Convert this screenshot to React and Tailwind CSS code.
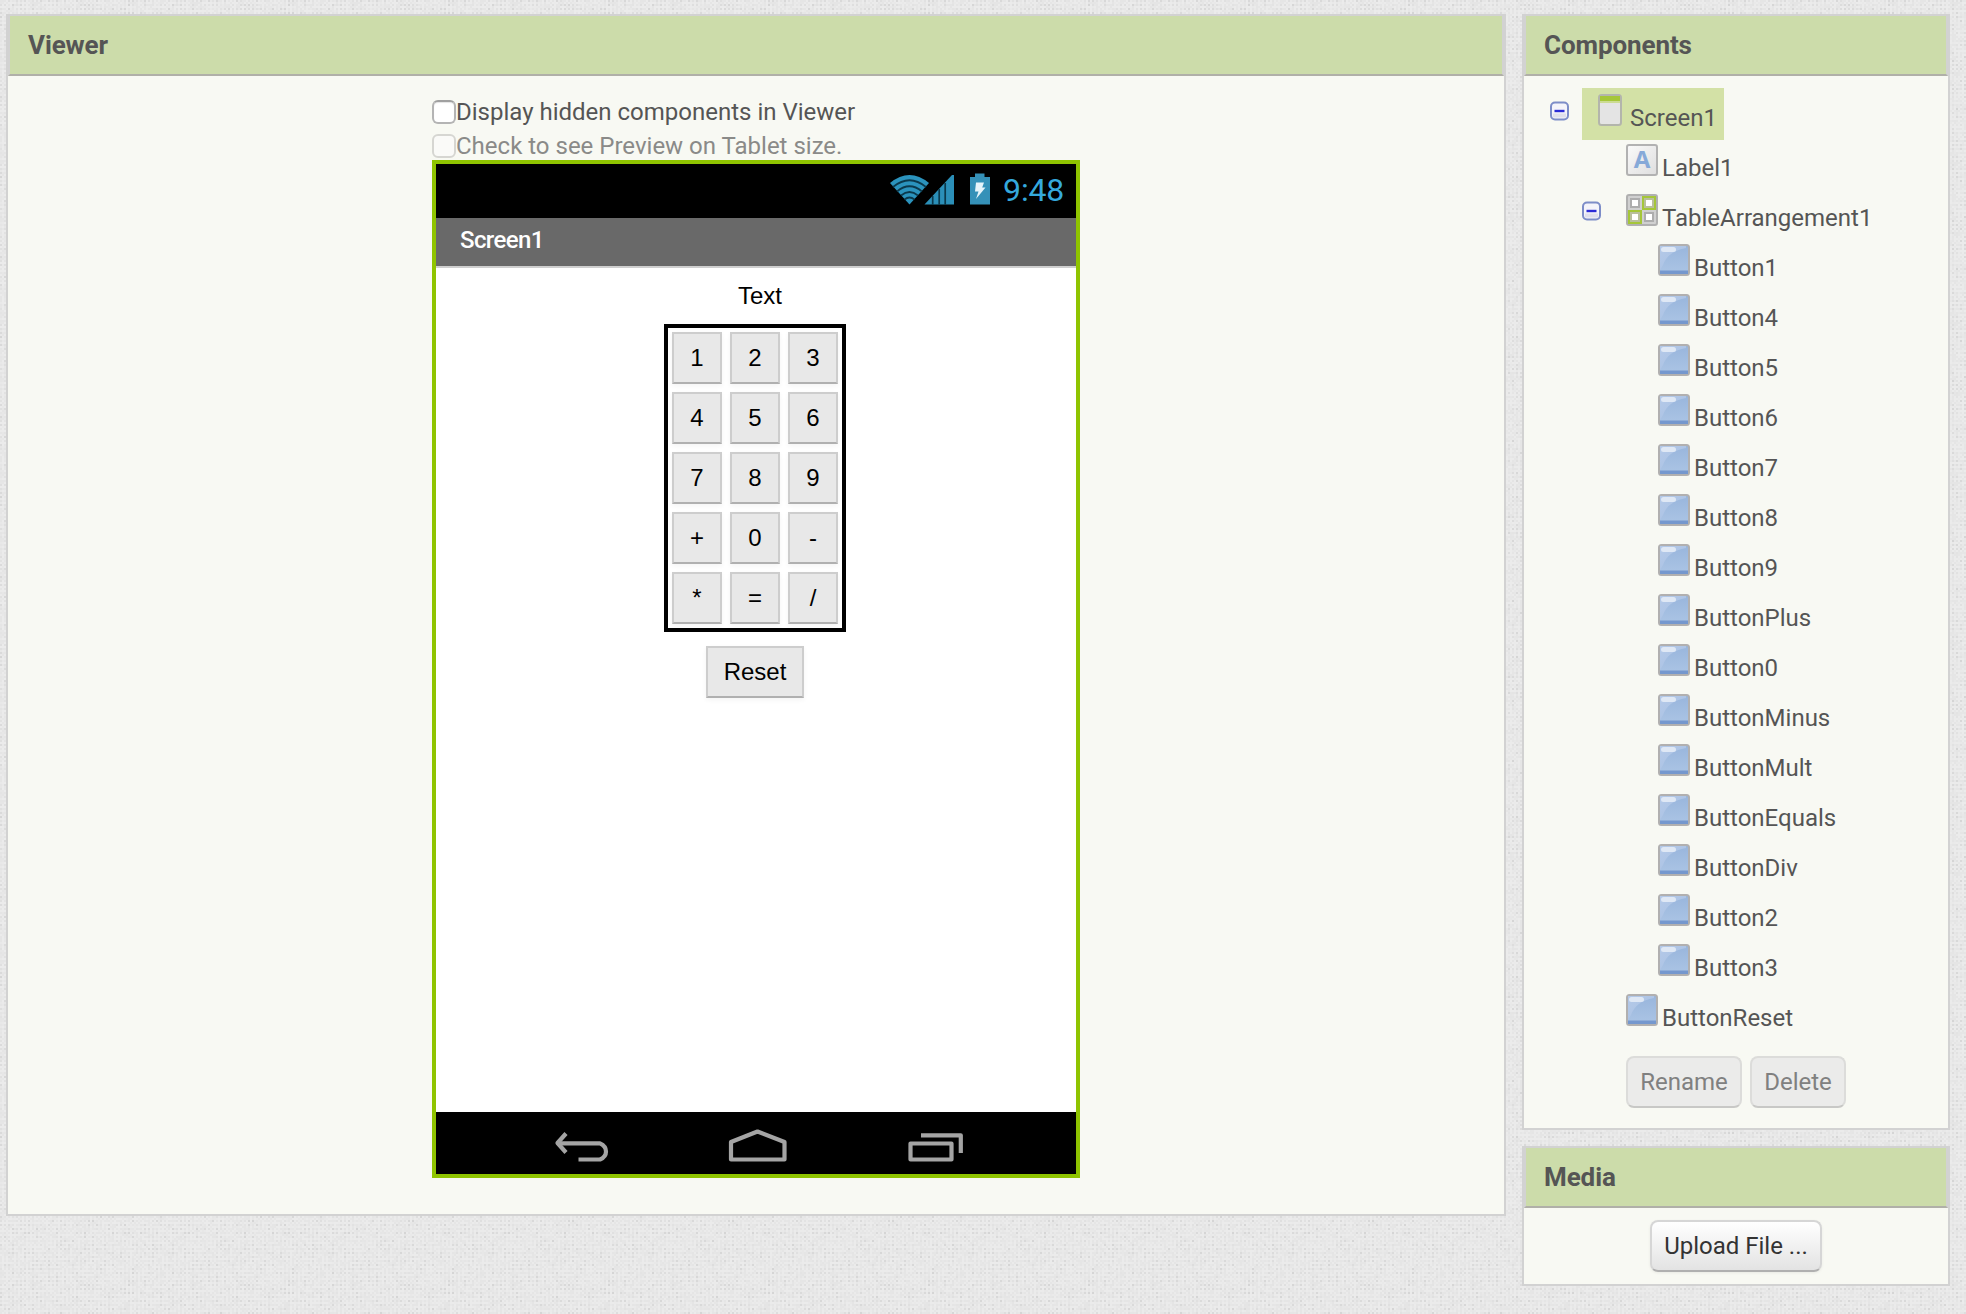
import React from "react";

const BUTTON_NAMES = [
  "Button1", "Button4", "Button5", "Button6", "Button7", "Button8", "Button9",
  "ButtonPlus", "Button0", "ButtonMinus", "ButtonMult", "ButtonEquals",
  "ButtonDiv", "Button2", "Button3",
];

const KEYS = ["1", "2", "3", "4", "5", "6", "7", "8", "9", "+", "0", "-", "*", "=", "/"];

// Woven texture cells: deterministic noise on a 2px grid.
const CELLS = (() => {
  let seed = 7;
  const rnd = () => {
    seed = (seed * 16807) % 2147483647;
    return seed / 2147483647;
  };
  const out = [];
  for (let y = 0; y < 80; y++) {
    for (let x = 0; x < 80; x++) {
      const r = rnd();
      const knot = x % 2 === 0 && y % 2 === 0;
      if (knot) out.push({ x, y, o: 0.025 + r * r * r * 0.07 });
      else if (r > 0.4) out.push({ x, y, o: (r - 0.4) * 0.045 });
    }
  }
  return out;
})();

function Linen() {
  return (
    <svg className="absolute inset-0 h-full w-full" aria-hidden="true">
      <defs>
        <pattern id="linen" width="160" height="160" patternUnits="userSpaceOnUse">
          {CELLS.map((c) => (
            <rect key={c.x + "-" + c.y} x={c.x * 2} y={c.y * 2} width="2" height="2" fill="#000" fillOpacity={c.o} />
          ))}
        </pattern>
      </defs>
      <rect width="100%" height="100%" fill="url(#linen)" />
    </svg>
  );
}

function Panel({ title, className, children }) {
  return (
    <section className={"flex flex-col border-2 border-[#d2d2d2] bg-[#f8f9f3] " + className}>
      <h2 className="flex h-[60px] shrink-0 items-center border-x-2 border-b-2 border-x-[#d2d2d2] border-b-[#b0b0a8] bg-[#ccdcaa] px-[18px] text-[26px] font-bold tracking-[-0.1px] text-[#555]">
        {title}
      </h2>
      {children}
    </section>
  );
}

function CheckRow({ label, disabled }) {
  return (
    <label className={"flex h-[34px] items-center " + (disabled ? "text-[#8a8a88]" : "")}>
      <span
        className={
          "h-6 w-6 shrink-0 rounded-[6px] border-2 " +
          (disabled
            ? "border-[#d6d6d2] bg-[#fafaf8]"
            : "border-[#b4b4b4] border-t-[#a0a0a0] bg-white shadow-[inset_0_1px_1px_#e4e4e4]")
        }
      />
      <span className="whitespace-nowrap">{label}</span>
    </label>
  );
}

function StatusIcons() {
  return (
    <svg width="104" height="34" viewBox="888 171 104 34" aria-hidden="true">
      <path d="M909.5 203.5 L890 182 Q909.5 166 929 182 Z" fill="#2b93bd" />
      <g fill="none" stroke="#0b394c" strokeWidth="1.7">
        <path d="M893 186 Q909.5 172.500 926 186" />
        <path d="M897 190.500 Q909.5 180 922 190.500" />
        <path d="M901 194.500 Q909.5 187.500 918 194.500" />
        <path d="M904.500 198.500 Q909.5 194.500 914.500 198.500" />
      </g>
      <path d="M924.500 203.500 L952 174 H954 V203.500 Z" fill="#2b8fb8" />
      <path d="M932.700 195V204M939.200 188V204M945.200 182V204" stroke="#0b394c" strokeWidth="1.700" />
      <path d="M975 172.500 h9.500 v3.500 h5.500 v27.500 h-20 v-27.500 h5 z" fill="#3591b8" />
      <path d="M976 181.500 h8 l-1.800 5 h3.300 l-9.500 11.500 2.500 -7.500 h-3.500 z" fill="#e6f4fa" />
    </svg>
  );
}

function NavIcons() {
  return (
    <svg width="640" height="62" viewBox="436 1112 640 62" fill="none" stroke="#a4a4a4" strokeWidth="4.200" strokeLinejoin="round" aria-hidden="true">
      <path d="M566 1133.500 L557.500 1143 L566 1152.500" />
      <path d="M558 1143.300 H600 Q606 1146 606 1151.500 Q606 1157 600 1159.500 H578.500" />
      <path d="M731 1159.500 V1142 L757.500 1131.500 L784.500 1142 V1159.500 Z" />
      <rect x="910.500" y="1143.500" width="41" height="16" />
      <path d="M921 1135.300 H960.800 V1153" />
    </svg>
  );
}

const KEY_STYLE =
  "flex h-[52px] items-center justify-center border-2 border-[#cdcdcd] border-b-[#b0b0b0] bg-[#e8e8e8] font-['Liberation_Sans',sans-serif] text-black shadow-[0_2px_5px_#0000000c] ";

function Phone() {
  return (
    <div className="flex h-[1018px] w-[648px] flex-col border-4 border-[#8fc400] bg-white">
      <div className="flex h-[54px] items-start justify-end bg-black pr-[12px] pt-2">
        <StatusIcons />
        <span className="ml-[11px] text-[32px] leading-9 tracking-[-0.2px] text-[#35a9dc]">9:48</span>
      </div>
      <div className="flex h-[50px] items-start border-b-2 border-[#cfcfcf] bg-[#696969] pl-6 pt-2 font-medium leading-7 tracking-[-0.6px] text-white">
        Screen1
      </div>
      <div className="flex flex-1 flex-col items-center pr-[2px] font-['Liberation_Sans',sans-serif] text-black">
        <div className="mt-[14px] h-7 pl-[10px] leading-7">Text</div>
        <div className="mt-[14px] grid h-[308px] w-[182px] grid-cols-3 gap-2 border-4 border-black p-1">
          {KEYS.map((k) => (
            <button key={k} className={KEY_STYLE}>{k}</button>
          ))}
        </div>
        <button className={KEY_STYLE + "mt-[14px] w-[98px]"}>Reset</button>
      </div>
      <div className="h-[62px] bg-black">
        <NavIcons />
      </div>
    </div>
  );
}

function Toggle() {
  return (
    <svg width="20" height="20" viewBox="0 0 20 20" className="shrink-0" aria-hidden="true">
      <rect x="1" y="1.500" width="17" height="17" rx="4" fill="#f4f4fa" stroke="#7d8dc8" strokeWidth="2" />
      <path d="M3 12.500h13v4H3z" fill="#e0e0ec" />
      <path d="M4.500 10h10" stroke="#2b2bd6" strokeWidth="2.400" />
    </svg>
  );
}

function ScreenIcon() {
  return (
    <svg width="24" height="32" viewBox="0 0 24 32" aria-hidden="true">
      <rect x="1" y="1" width="22" height="30" rx="2.500" fill="#e4e4e4" stroke="#b3b5ac" strokeWidth="2" />
      <path d="M2 2h20v5H2z" fill="#a5c639" />
      <path d="M2 7h20v2H2z" fill="#cbdb92" />
    </svg>
  );
}

function LabelIcon() {
  return (
    <svg width="32" height="32" viewBox="0 0 32 32" aria-hidden="true">
      <defs>
        <linearGradient id="labelFill" x1="0" y1="0" x2="1" y2="1">
          <stop offset="0" stopColor="#fafafa" />
          <stop offset="1" stopColor="#dedede" />
        </linearGradient>
      </defs>
      <rect x="1" y="1" width="30" height="30" rx="2" fill="url(#labelFill)" stroke="#b2b2b2" strokeWidth="2" />
      <text x="16" y="24" textAnchor="middle" fontFamily="Noto Sans, sans-serif" fontWeight="700" fontSize="24" fill="#86a9d8">A</text>
    </svg>
  );
}

function TableIcon() {
  return (
    <svg width="32" height="32" viewBox="0 0 32 32" aria-hidden="true">
      <rect x="1" y="1" width="30" height="30" rx="2" fill="#d0d0d0" stroke="#b0b0b0" strokeWidth="2" />
      <path d="M16 2h14v14H16zM2 16h14v14H2z" fill="#a5c639" />
      <g fill="#fff" strokeWidth="2">
        <path d="M5 5h8v8H5zM19 19h8v8H19z" stroke="#adadad" />
        <path d="M19 5h8v8H19zM5 19h8v8H5z" stroke="#b9bf9c" />
      </g>
    </svg>
  );
}

function ButtonIcon() {
  return (
    <svg width="32" height="32" viewBox="0 0 32 32" aria-hidden="true">
      <defs>
        <linearGradient id="btnFill" x1="0" y1="0" x2="0" y2="1">
          <stop offset="0" stopColor="#98b5dc" />
          <stop offset="1" stopColor="#acc5e5" />
        </linearGradient>
        <linearGradient id="btnGlare" x1="0" y1="0" x2="1" y2="1">
          <stop offset="0" stopColor="#b4c9e8" />
          <stop offset="1" stopColor="#a9c1e3" />
        </linearGradient>
      </defs>
      <rect x="1" y="1" width="30" height="30" rx="2.500" fill="url(#btnFill)" stroke="#b1b0b0" strokeWidth="2" />
      <path d="M2 2h26v2Q10 7 5 21L2 26z" fill="url(#btnGlare)" />
      <path d="M2 26.500h28V30H2z" fill="#7598ce" />
      <rect x="3" y="3" width="15" height="5" rx="2.500" fill="#dfe8f5" />
    </svg>
  );
}

const ICONS = { label: LabelIcon, table: TableIcon, button: ButtonIcon };

function TreeRow({ icon, name, className, toggle }) {
  const Icon = ICONS[icon];
  return (
    <li className={"flex h-[50px] items-start " + className}>
      {toggle && (
        <span className="mr-6 pt-[11px]">
          <Toggle />
        </span>
      )}
      <span className="flex items-baseline gap-1 pt-1 leading-7">
        <Icon />
        <span>{name}</span>
      </span>
    </li>
  );
}

const ACTION =
  "flex h-[52px] items-center justify-center rounded-lg border-2 ";

export default function App() {
  return (
    <div className="relative h-[1314px] w-[1966px] overflow-hidden bg-[#ebebeb] font-[Roboto,sans-serif] text-[24px] text-[#555]">
      <Linen />
      <main className="relative flex items-start gap-4 pl-[6px] pt-[14px]">
        <Panel title="Viewer" className="h-[1202px] w-[1500px]">
          <div className="flex flex-col self-start pl-[424px] pt-[19px]">
            <CheckRow label="Display hidden components in Viewer" />
            <CheckRow label="Check to see Preview on Tablet size." disabled />
            <div className="-mt-[3px]">
              <Phone />
            </div>
          </div>
        </Panel>

        <div className="flex w-[428px] flex-col gap-4">
          <Panel title="Components" className="h-[1116px]">
            <div className="flex pl-[26px] pt-3">
              <span className="pt-[13px]">
                <Toggle />
              </span>
              <span className="ml-3 flex h-[52px] w-[142px] items-baseline gap-[8px] bg-[#d3e1a6] pl-4 pt-[6px] leading-7">
                <ScreenIcon />
                <span>Screen1</span>
              </span>
            </div>
            <ul>
              <TreeRow icon="label" name="Label1" className="pl-[102px]" />
              <TreeRow icon="table" name="TableArrangement1" className="pl-[58px]" toggle />
              {BUTTON_NAMES.map((n) => (
                <TreeRow key={n} icon="button" name={n} className="pl-[134px]" />
              ))}
              <TreeRow icon="button" name="ButtonReset" className="pl-[102px]" />
            </ul>
            <div className="mt-4 flex gap-2 pl-[102px]">
              <button className={ACTION + "w-[116px] border-[#dcdcda] border-b-[#c8c8c6] bg-[#ebebea] text-[#808080]"}>Rename</button>
              <button className={ACTION + "w-[96px] border-[#dcdcda] border-b-[#c8c8c6] bg-[#ebebea] text-[#808080]"}>Delete</button>
            </div>
          </Panel>

          <Panel title="Media" className="h-[140px]">
            <div className="flex justify-center pt-3">
              <button className={ACTION + "w-[172px] border-[#d6d6d6] border-b-[#b0b0b0] bg-linear-to-b from-white to-[#e3e3e3] text-[#333] shadow-[0_1px_3px_#00000010]"}>
                Upload File ...
              </button>
            </div>
          </Panel>
        </div>
      </main>
    </div>
  );
}
